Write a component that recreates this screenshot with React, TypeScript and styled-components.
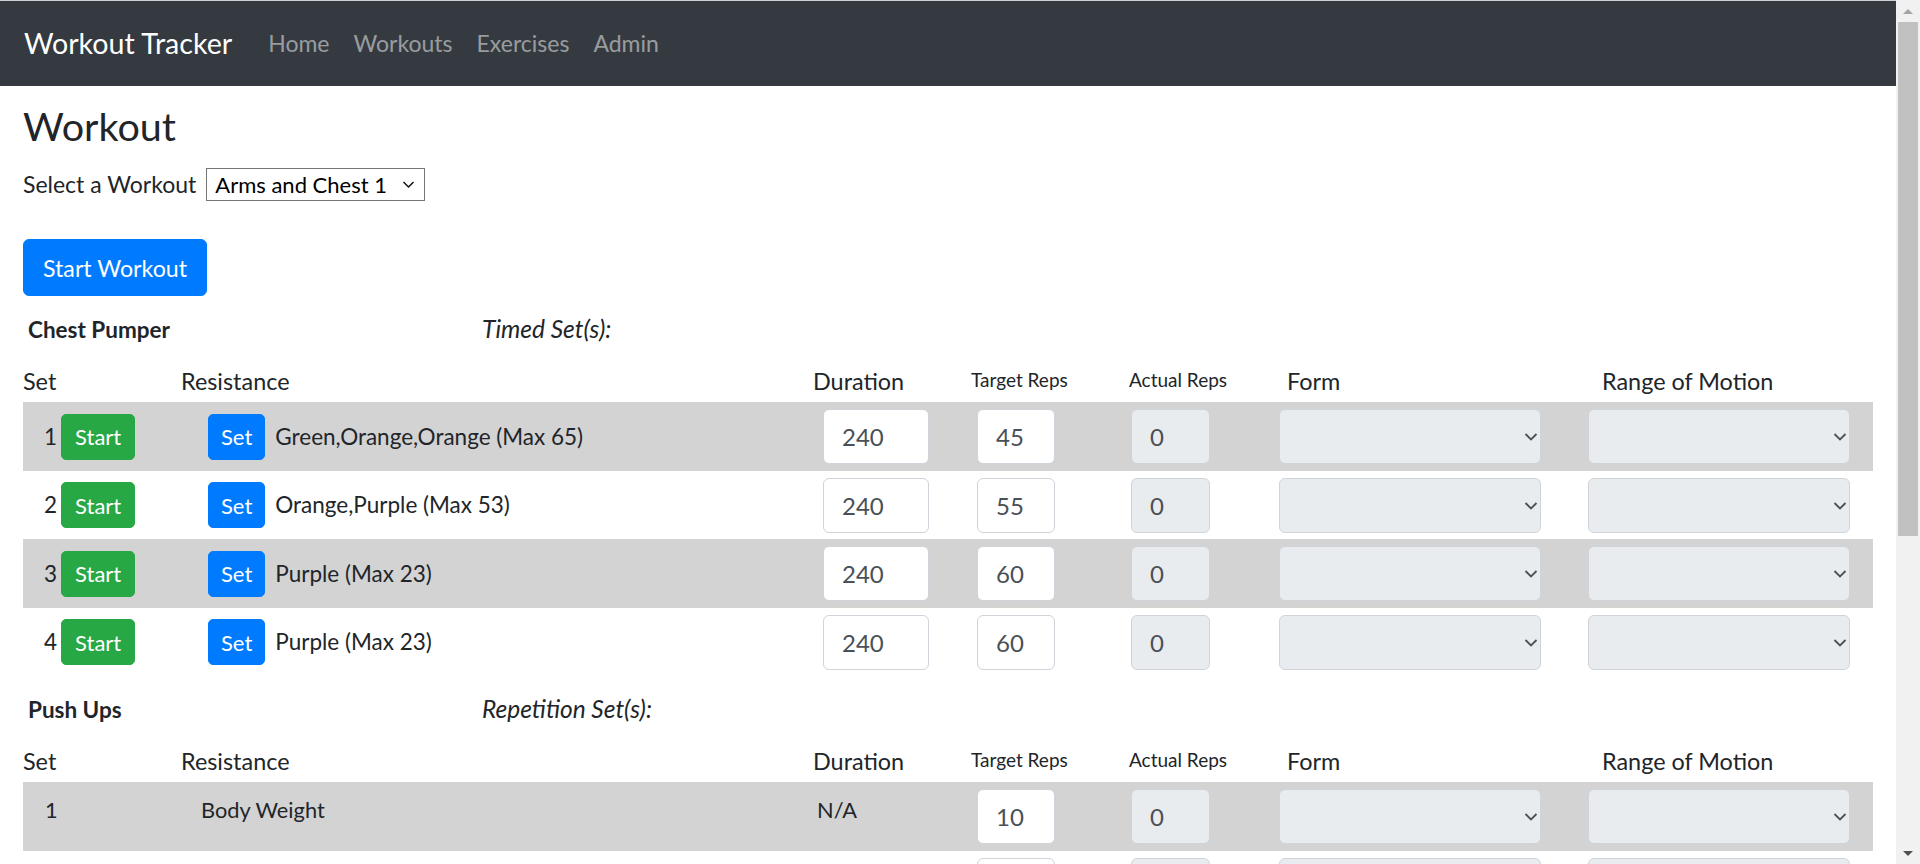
import React from 'react';
import styled, { createGlobalStyle } from 'styled-components';

const GlobalStyle = createGlobalStyle`
  *, *::before, *::after { box-sizing: border-box; }
  html, body { margin: 0; padding: 0; }
  body {
    font-family: Lato, "Liberation Sans", Arial, sans-serif;
    font-size: 22.5px;
    line-height: 1.5;
    color: #212529;
    background: #fff;
  }
`;

const COLS = '158px 632px 158px 158px 150px 309px 1fr';

const Page = styled.div`
  margin-right: 24px;
`;

const ScrollRail = styled.div`
  position: fixed;
  top: 0;
  right: 0;
  width: 24px;
  height: 100vh;
  display: flex;
  flex-direction: column;
  align-items: center;
  background: #f1f1f1;
`;

const RailArrow = styled.div<{ $dir: 'up' | 'down' }>`
  flex: none;
  display: flex;
  align-items: center;
  justify-content: center;
  width: 24px;
  height: 22px;
  &::after {
    content: '';
    border-left: 5px solid transparent;
    border-right: 5px solid transparent;
    ${(p) => (p.$dir === 'up' ? 'border-bottom: 5px solid #a3a3a3;' : 'border-top: 5px solid #505050;')}
  }
`;

const RailTrack = styled.div`
  flex: 1;
  width: 100%;
  padding: 0 2px;
`;

const RailThumb = styled.div`
  height: 514px;
  background: #c1c1c1;
`;

const Navbar = styled.nav`
  display: flex;
  align-items: center;
  height: 86px;
  padding: 0 24px;
  border-top: 1px solid #cfd1d3;
  background: #343a40;
`;

const Brand = styled.a`
  font-size: 28.6px;
  color: #fff;
  margin-right: 24px;
  text-decoration: none;
`;

const NavLink = styled.a`
  font-size: 23px;
  color: rgba(255, 255, 255, 0.5);
  padding: 0 12px;
  text-decoration: none;
`;

const Main = styled.main`
  padding: 0 23px 40px;
`;

const PageTitle = styled.h1`
  margin: 16px 0 17px;
  font-size: 39.5px;
  font-weight: 400;
  line-height: 1.2;
`;

const SelectRow = styled.div`
  display: flex;
  align-items: center;
  gap: 10px;
  height: 36px;
  font-size: 23px;
`;

const SelectBox = styled.div`
  position: relative;
  display: flex;
`;

const WorkoutSelect = styled.select`
  appearance: none;
  width: 219px;
  height: 33px;
  padding: 0 8px;
  font-family: inherit;
  font-size: 22px;
  color: #000;
  background: #fff;
  border: 1px solid #767676;
  border-radius: 0;
`;

const PrimaryButton = styled.button`
  margin-top: 37px;
  height: 57px;
  padding: 0 19px;
  font-family: inherit;
  font-size: 23.2px;
  color: #fff;
  background: #007bff;
  border: 1px solid #007bff;
  border-radius: 6px;
`;

const Exercise = styled.section`
  margin-top: 15px;
`;

const ExerciseHead = styled.div`
  display: grid;
  grid-template-columns: 459px 1fr;
  align-items: center;
  height: 36px;
  margin-bottom: 16px;
`;

const ExerciseName = styled.div`
  padding-left: 5px;
  font-size: 22.5px;
  font-weight: 700;
`;

const SetType = styled.div`
  font-style: italic;
  font-size: 24.5px;
`;

const HeaderRow = styled.div`
  display: grid;
  grid-template-columns: ${COLS};
  align-items: start;
  height: 36px;
  margin-bottom: 3px;
`;

const HeadLabel = styled.div<{ $small?: boolean; $offset?: number }>`
  padding-left: ${(p) => p.$offset ?? 0}px;
  font-size: ${(p) => (p.$small ? '19px' : '23.4px')};
  line-height: ${(p) => (p.$small ? '33px' : '36px')};
  white-space: nowrap;
`;

const Row = styled.div<{ $striped: boolean }>`
  display: grid;
  grid-template-columns: ${COLS};
  align-items: center;
  height: 68.5px;
  background: ${(p) => (p.$striped ? '#d3d3d3' : 'transparent')};
`;

const SetCell = styled.div`
  display: flex;
  align-items: center;
  gap: 4px;
  padding-left: 21px;
`;

const ResistanceCell = styled.div`
  display: flex;
  align-items: center;
  gap: 10px;
  padding-left: 27px;
  white-space: nowrap;
`;

const TopText = styled.div<{ $offset: number }>`
  align-self: start;
  padding-top: 10px;
  padding-left: ${(p) => p.$offset}px;
  font-size: 21.8px;
  line-height: 36px;
  white-space: nowrap;
`;

const SmallButton = styled.button<{ $tone: 'success' | 'primary' }>`
  height: 46px;
  padding: 0 ${(p) => (p.$tone === 'success' ? 13 : 12)}px;
  font-family: inherit;
  font-size: 22px;
  color: #fff;
  background: ${(p) => (p.$tone === 'success' ? '#28a745' : '#007bff')};
  border: 1px solid ${(p) => (p.$tone === 'success' ? '#28a745' : '#007bff')};
  border-radius: 5px;
`;

const Field = styled.input<{ $w: number; $offset: number }>`
  width: ${(p) => p.$w}px;
  height: 55px;
  margin-left: ${(p) => p.$offset}px;
  padding: 0 18px;
  font-family: inherit;
  font-size: 24px;
  color: #495057;
  background: #fff;
  border: 1px solid #ced4da;
  border-radius: 6px;
  &:disabled {
    background: #e9ecef;
    opacity: 1;
  }
`;

const SelectWrap = styled.div`
  position: relative;
  width: 262px;
  height: 55px;
`;

const RatingSelect = styled.select`
  appearance: none;
  width: 100%;
  height: 100%;
  font-family: inherit;
  font-size: 24px;
  background: #e9ecef;
  border: 1px solid #ced4da;
  border-radius: 6px;
  opacity: 1;
`;

const Chevron = styled.svg<{ $right: number; $top: number }>`
  position: absolute;
  right: ${(p) => p.$right}px;
  top: ${(p) => p.$top}px;
  pointer-events: none;
`;

type TimedSet = { res: string; duration: number; target: number };

const chestPumper: TimedSet[] = [
  { res: 'Green,Orange,Orange (Max 65)', duration: 240, target: 45 },
  { res: 'Orange,Purple (Max 53)', duration: 240, target: 55 },
  { res: 'Purple (Max 23)', duration: 240, target: 60 },
  { res: 'Purple (Max 23)', duration: 240, target: 60 },
];

const pushUps = [10, 10, 10, 10];

const curls: TimedSet[] = [
  { res: 'Green,Orange (Max 42)', duration: 180, target: 30 },
  { res: 'Orange (Max 30)', duration: 180, target: 30 },
  { res: 'Orange (Max 30)', duration: 180, target: 30 },
];

function Rating() {
  return (
    <SelectWrap>
      <RatingSelect disabled defaultValue="">
        <option value="" />
      </RatingSelect>
      <Chevron $right={2} $top={22} width="16" height="11" viewBox="0 0 16 11">
        <path d="M2.5 3 L8 8.5 L13.5 3" fill="none" stroke="#495057" strokeWidth="1.8" />
      </Chevron>
    </SelectWrap>
  );
}

function Headers() {
  return (
    <HeaderRow>
      <HeadLabel>Set</HeadLabel>
      <HeadLabel>Resistance</HeadLabel>
      <HeadLabel>Duration</HeadLabel>
      <HeadLabel $small>Target Reps</HeadLabel>
      <HeadLabel $small>Actual Reps</HeadLabel>
      <HeadLabel $offset={8}>Form</HeadLabel>
      <HeadLabel $offset={14}>Range of Motion</HeadLabel>
    </HeaderRow>
  );
}

function TimedExercise({ name, sets }: { name: string; sets: TimedSet[] }) {
  return (
    <Exercise>
      <ExerciseHead>
        <ExerciseName>{name}</ExerciseName>
        <SetType>Timed Set(s):</SetType>
      </ExerciseHead>
      <Headers />
      {sets.map((s, i) => (
        <Row key={i} $striped={i % 2 === 0}>
          <SetCell>
            <span>{i + 1}</span>
            <SmallButton $tone="success">Start</SmallButton>
          </SetCell>
          <ResistanceCell>
            <SmallButton $tone="primary">Set</SmallButton>
            <span>{s.res}</span>
          </ResistanceCell>
          <Field $w={106} $offset={10} defaultValue={s.duration} />
          <Field $w={78} $offset={6} defaultValue={s.target} />
          <Field $w={79} $offset={2} defaultValue={0} disabled />
          <Rating />
          <Rating />
        </Row>
      ))}
    </Exercise>
  );
}

function RepExercise({ name, targets }: { name: string; targets: number[] }) {
  return (
    <Exercise>
      <ExerciseHead>
        <ExerciseName>{name}</ExerciseName>
        <SetType>Repetition Set(s):</SetType>
      </ExerciseHead>
      <Headers />
      {targets.map((t, i) => (
        <Row key={i} $striped={i % 2 === 0}>
          <TopText $offset={22}>{i + 1}</TopText>
          <TopText $offset={20}>Body Weight</TopText>
          <TopText $offset={4}>N/A</TopText>
          <Field $w={78} $offset={6} defaultValue={t} />
          <Field $w={79} $offset={2} defaultValue={0} disabled />
          <Rating />
          <Rating />
        </Row>
      ))}
    </Exercise>
  );
}

export default function App() {
  return (
    <>
      <GlobalStyle />
      <Page>
        <Navbar>
          <Brand href="#">Workout Tracker</Brand>
          <NavLink href="#">Home</NavLink>
          <NavLink href="#">Workouts</NavLink>
          <NavLink href="#">Exercises</NavLink>
          <NavLink href="#">Admin</NavLink>
        </Navbar>
        <Main>
          <PageTitle>Workout</PageTitle>
          <SelectRow>
            <span>Select a Workout</span>
            <SelectBox>
              <WorkoutSelect defaultValue="a1">
                <option value="a1">Arms and Chest 1</option>
                <option value="a2">Arms and Chest 2</option>
                <option value="l1">Legs 1</option>
              </WorkoutSelect>
              <Chevron $right={10} $top={12} width="13" height="9" viewBox="0 0 13 9">
                <path d="M1.5 2 L6.5 7 L11.5 2" fill="none" stroke="#111" strokeWidth="1.5" />
              </Chevron>
            </SelectBox>
          </SelectRow>
          <PrimaryButton>Start Workout</PrimaryButton>
          <TimedExercise name="Chest Pumper" sets={chestPumper} />
          <RepExercise name="Push Ups" targets={pushUps} />
          <TimedExercise name="Bicep Curls" sets={curls} />
        </Main>
      </Page>
      <ScrollRail aria-hidden="true">
        <RailArrow $dir="up" />
        <RailTrack>
          <RailThumb />
        </RailTrack>
        <RailArrow $dir="down" />
      </ScrollRail>
    </>
  );
}
